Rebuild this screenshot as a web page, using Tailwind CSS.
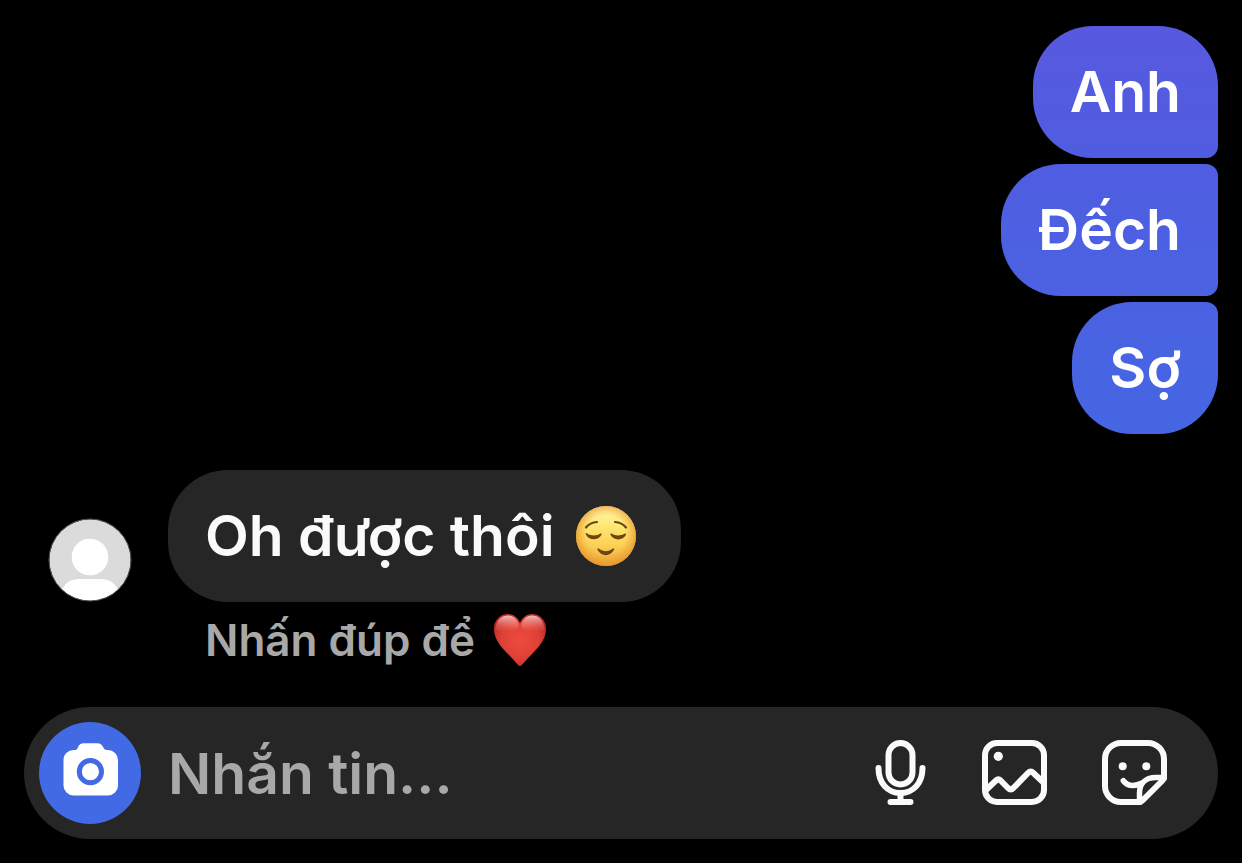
<!DOCTYPE html>
<html lang="vi">
<head>
<meta charset="utf-8">
<meta name="viewport" content="width=device-width, initial-scale=1">
<title>Tin nhắn</title>
<script src="https://cdn.jsdelivr.net/npm/@tailwindcss/browser@4"></script>
</head>
<body class="bg-black text-white font-['Inter','Noto_Sans',sans-serif] font-semibold">
<main class="flex min-h-screen flex-col px-6 pt-[26px] pb-6">
  <section class="flex flex-col items-end gap-[6px] text-[57px] leading-[72px]" aria-label="Tin nhắn đã gửi">
    <p class="rounded-[60px] rounded-br-[12px] bg-linear-to-b from-[#5759de] to-[#505de1] px-[37px] py-[30px]">Anh</p>
    <p class="rounded-l-[60px] rounded-r-[12px] bg-linear-to-b from-[#4f5de1] to-[#4b62e3] px-[37px] py-[30px]">Đếch</p>
    <p class="rounded-[60px] rounded-tr-[12px] bg-linear-to-b from-[#4a62e2] to-[#4566e3] px-[37px] py-[30px]">Sợ</p>
  </section>

  <section class="mt-9 flex items-end" aria-label="Tin nhắn đã nhận">
    <svg class="ml-6 size-[84px] shrink-0" viewBox="0 0 84 84" role="img" aria-label="Ảnh đại diện">
      <defs><clipPath id="avatar"><circle cx="42" cy="42" r="40.5"/></clipPath></defs>
      <circle cx="42" cy="42" r="40.7" fill="#dbdbdb"/>
      <g clip-path="url(#avatar)" fill="#fff">
        <circle cx="42" cy="39" r="18.3"/>
        <path d="M12 76C16 66 21 61 32 61H52C63 61 68 66 72 76V84H12Z"/>
      </g>
      <circle cx="42" cy="42" r="41" fill="none" stroke="#555" stroke-width="1"/>
    </svg>
    <p class="ml-9 flex items-center rounded-[60px] bg-[#262626] py-[30px] pr-[44px] pl-[37px] text-[57px] leading-[72px] text-[#fafafa]">
      <span>Oh được thôi</span>
      <svg class="ml-5 size-[62px]" viewBox="0 0 62 62" role="img" aria-label="😌">
        <defs>
          <linearGradient id="face" x1="0" y1="0" x2="0" y2="1"><stop offset="0" stop-color="#fff6b0"/><stop offset=".3" stop-color="#ffe976"/><stop offset=".65" stop-color="#fdd055"/><stop offset="1" stop-color="#f0aa40"/></linearGradient>
          <radialGradient id="rim" cx=".5" cy=".48" r=".54"><stop offset=".6" stop-color="#e99a2c" stop-opacity="0"/><stop offset="1" stop-color="#e58f25" stop-opacity=".85"/></radialGradient>
        </defs>
        <circle cx="31" cy="31" r="30" fill="url(#face)"/>
        <circle cx="31" cy="31" r="30" fill="url(#rim)"/>
        <g fill="none" stroke="#6b4512" stroke-width="2.2" stroke-linecap="round">
          <path d="M11 22.5Q15 17.3 22 17M40 17Q47 17.3 51 22.5"/>
        </g>
        <g fill="#6b4512">
          <path d="M10.5 28.7C11 27.5 12 28.2 12.5 28.7C16 31 22 31 25 28.7C26 28 27 28.5 26.5 29.8C23 36 13.5 36 10.5 28.7ZM35.5 29.8C35 28.5 36 28 37 28.7C40 31 46 31 49.5 28.7C50.5 28 51.5 28.7 51 29.8C48 36 38.5 36 35.5 29.8Z"/>
          <path d="M22.5 44.8C22 43.5 23.2 43 24 43.7C28 47 34 47 37.5 43.7C38.5 43 39.7 43.5 39 44.8C35.5 52 26 52 22.5 44.8Z"/>
        </g>
      </svg>
    </p>
  </section>

  <p class="ml-[181px] mt-2 flex h-[60px] items-center text-[44px] leading-[60px] text-[#a8a8a8]">
    <span>Nhấn đúp để</span>
    <svg class="ml-[18px] size-[54px]" viewBox="0 0 54 54" role="img" aria-label="❤️">
      <defs>
        <radialGradient id="heart" cx=".5" cy=".5" r=".6"><stop offset="0" stop-color="#ee4c40"/><stop offset=".6" stop-color="#df4035"/><stop offset="1" stop-color="#b92322"/></radialGradient>
        <linearGradient id="shine" x1="0" y1="0" x2="0" y2="1"><stop offset="0" stop-color="#fff" stop-opacity=".7"/><stop offset="1" stop-color="#ff8a80" stop-opacity="0"/></linearGradient>
      </defs>
      <path d="M27 53C25 53 22 48 16 42C8 34 1 26 1 16C1 7 7 1 15 1C21 1 25 5 27 10C29 5 33 1 39 1C47 1 53 7 53 16C53 26 46 34 38 42C32 48 29 53 27 53Z" fill="url(#heart)"/>
      <path d="M3 18C2 8 8 2.500 15 2.500C21 2.500 24.500 7 26 13C24 19 6 20 3 18ZM51 18C52 8 46 2.500 39 2.500C33 2.500 29.500 7 28 13C30 19 48 20 51 18Z" fill="url(#shine)"/>
    </svg>
  </p>

  <form class="mt-auto flex h-[132px] items-center rounded-full bg-[#262626] pr-[50px] pl-[15px]">
    <button type="button" aria-label="Máy ảnh" class="size-[102px] shrink-0 rounded-full bg-[#416ae4]">
      <svg viewBox="0 0 102 102" class="size-full" aria-hidden="true">
        <path d="M35 28H36C40 28 38 21.300 45 21.300H58C65 21.300 63 28 68 28H69A10 10 0 0 1 79 38V63.500A10 10 0 0 1 69 73.500H34.500A10 10 0 0 1 24.500 63.500V38A10 10 0 0 1 35 28Z" fill="#fff"/>
        <circle cx="51.400" cy="49.700" r="11.100" fill="none" stroke="#416ae4" stroke-width="5"/>
      </svg>
    </button>
    <input type="text" aria-label="Nhắn tin" placeholder="Nhắn tin..." class="ml-[27px] h-[90px] min-w-0 flex-1 bg-transparent text-[57px] leading-[72px] outline-none placeholder:text-[#a8a8a8]">
    <div class="flex shrink-0 items-center gap-[54px]">
      <button type="button" aria-label="Ghi âm" class="h-[66px] w-[54px]">
        <svg viewBox="6 0 54 66" class="size-full" fill="none" stroke="#fafafa" stroke-width="6" stroke-linecap="round" aria-hidden="true">
          <rect x="20.500" y="3" width="24" height="41.500" rx="12"/>
          <path d="M10.500 28C10.500 43 19.500 53 32.500 53S54.500 43 54.500 28M32.500 53V62M22.500 62H42.500"/>
        </svg>
      </button>
      <button type="button" aria-label="Thư viện ảnh" class="size-[66px]">
        <svg viewBox="0 0 66 66" class="size-full" fill="none" stroke="#fafafa" stroke-width="6" stroke-linejoin="round" aria-hidden="true">
          <rect x="3" y="3" width="59" height="59" rx="12"/>
          <circle cx="16.300" cy="16.300" r="4.600" fill="#fafafa" stroke="none"/>
          <path d="M4 50L14 40.500Q16.300 38.300 18.600 40.500L26 48Q28.700 50.500 31.400 48L46 33Q48.700 30.300 51.400 33L62 43"/>
        </svg>
      </button>
      <button type="button" aria-label="Nhãn dán" class="size-[66px]">
        <svg viewBox="0 0 66 66" class="size-full" fill="none" stroke="#fafafa" stroke-width="6" stroke-linecap="round" stroke-linejoin="round" aria-hidden="true">
          <path d="M38.500 62H19A16 16 0 0 1 3 46V19A16 16 0 0 1 19 3H46A16 16 0 0 1 62 19V38.500L60 41L41 60Z"/>
          <path d="M61 37.500H54C43 37.500 37.500 44 37.500 53V60.500" stroke-width="5.500"/>
          <path d="M21.300 40.700C25 45.500 31 47.300 40 43" stroke-width="5.500"/>
          <g fill="#fafafa" stroke="none"><circle cx="20.700" cy="26.300" r="4"/><circle cx="44.300" cy="26.300" r="4"/></g>
        </svg>
      </button>
    </div>
  </form>
</main>
</body>
</html>
